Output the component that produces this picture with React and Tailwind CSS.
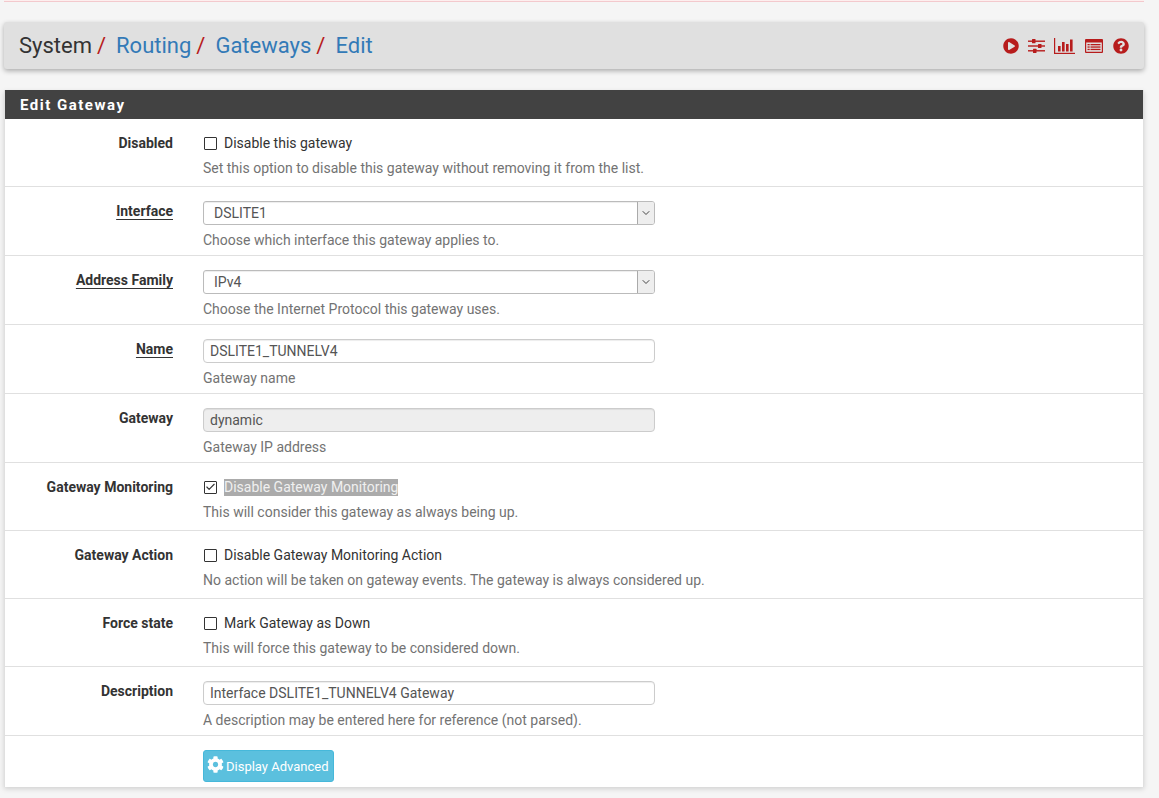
import { FaPlayCircle, FaQuestionCircle, FaCog } from 'react-icons/fa';
import { ChevronDown, Check } from 'lucide-react';

function Crumb({ children, last }) {
  return (
    <>
      <a className="text-[#337ab7]">{children}</a>
      {!last && <span className="text-[#b71c1c] ml-[5px] mr-[10px]">/</span>}
    </>
  );
}

function SlidersIcon() {
  return (
    <svg width="17" height="14" viewBox="0 0 17 14" fill="#b71c1c">
      <rect x="0" y="1.5" width="17" height="1.4" />
      <rect x="0" y="6.3" width="17" height="1.4" />
      <rect x="0" y="11.1" width="17" height="1.4" />
      <rect x="4" y="0" width="3.5" height="4.2" rx="0.5" />
      <rect x="10" y="4.9" width="3.5" height="4.2" rx="0.5" />
      <rect x="5" y="9.8" width="3.5" height="4.2" rx="0.5" />
    </svg>
  );
}

function BarsIcon() {
  return (
    <svg width="21" height="16" viewBox="0 0 21 16" fill="#b71c1c">
      <rect x="0" y="0" width="1.2" height="16" />
      <rect x="0" y="14.8" width="21" height="1.2" />
      <rect x="4" y="8" width="2.6" height="5.5" />
      <rect x="8" y="4" width="2.6" height="9.5" />
      <rect x="12" y="6" width="2.6" height="7.5" />
      <rect x="16" y="1.5" width="2.6" height="12" />
    </svg>
  );
}

function TableIcon() {
  return (
    <svg width="18" height="14" viewBox="0 0 18 14" fill="#b71c1c">
      <path fillRule="evenodd" d="M1 0h16a1 1 0 0 1 1 1v12a1 1 0 0 1-1 1H1a1 1 0 0 1-1-1V1a1 1 0 0 1 1-1zm.2 3.4v9.4h15.6V3.4z" />
      <rect x="2.5" y="5" width="2.2" height="1.3" />
      <rect x="5.5" y="5" width="10" height="1.3" />
      <rect x="2.5" y="7.4" width="2.2" height="1.3" />
      <rect x="5.5" y="7.4" width="10" height="1.3" />
      <rect x="2.5" y="9.8" width="2.2" height="1.3" />
      <rect x="5.5" y="9.8" width="10" height="1.3" />
    </svg>
  );
}

function Checkbox({ checked, label, selected }) {
  return (
    <div className="flex items-center h-[20px]">
      <span className="ml-[1px] w-[13px] h-[13px] border border-[#333] rounded-[1px] bg-white flex items-center justify-center">
        {checked && <Check size={12} strokeWidth={2.5} className="text-[#333]" />}
      </span>
      <span className={selected ? 'ml-[7px] bg-[#ababab] text-[#f0f0f0] leading-[17px]' : 'ml-[7px] text-[#333] leading-[17px]'}>{label}</span>
    </div>
  );
}

function SelectBox({ value }) {
  return (
    <div className="w-[452px] h-[24px] border border-[#bbb] rounded-[3px] bg-white flex items-center justify-between shadow-[inset_0_1px_1px_rgba(0,0,0,0.075)]">
      <span className="pl-[10px] text-[#555]">{value}</span>
      <span className="w-[17px] h-[22px] bg-[#eee] border-l border-[#aaa] rounded-r-[2px] flex items-center justify-center">
        <ChevronDown size={12} className="text-[#444]" />
      </span>
    </div>
  );
}

function TextBox({ value, disabled }) {
  return (
    <div className={`w-[452px] h-[24px] border border-[#ccc] rounded-[4px] flex items-center pl-[6px] text-[#555] shadow-[inset_0_1px_1px_rgba(0,0,0,0.075)] ${disabled ? 'bg-[#eee]' : 'bg-white'}`}>
      {value}
    </div>
  );
}

function Row({ label, required, help, height, children }) {
  return (
    <div className="flex border-b border-[#e0e0e0]" style={{ height }}>
      <div className="w-[168px] pt-[14px] text-right shrink-0">
        <span className={`font-bold text-[#333] leading-[20px] ${required ? 'underline underline-offset-[3px]' : ''}`}>{label}</span>
      </div>
      <div className="ml-[30px] pt-[14px]">
        {children}
        <p className="text-[#737373] mt-[5px] leading-[20px]">{help}</p>
      </div>
    </div>
  );
}

export default function App() {
  return (
    <div className="w-[1159px] h-[798px] overflow-hidden bg-[#f5f5f5] font-['Roboto',sans-serif] text-[14px] text-[#333]">
      <div className="mx-[4px] w-[1140px] h-[2px] bg-[#fdeeee] border-b border-[#f3c9cd]" />

      <div className="mx-[4px] w-[1140px] h-[47px] mt-[20px] bg-[#e0e0e0] rounded-[3px] shadow-[0_2px_5px_rgba(0,0,0,0.3)] flex items-center justify-between pl-[15px] pr-[15px]">
        <div className="text-[22px] leading-none flex items-baseline">
          <span className="text-[#333]">System</span>
          <span className="text-[#b71c1c] ml-[5px] mr-[10px]">/</span>
          <Crumb>Routing</Crumb>
          <Crumb>Gateways</Crumb>
          <Crumb last>Edit</Crumb>
        </div>
        <div className="flex items-center text-[#b71c1c]">
          <FaPlayCircle size={16} className="mr-[9px]" />
          <span className="mr-[9px]"><SlidersIcon /></span>
          <span className="mr-[10px]"><BarsIcon /></span>
          <span className="mr-[10px]"><TableIcon /></span>
          <FaQuestionCircle size={16} />
        </div>
      </div>

      <div className="mx-[4px] w-[1140px] mt-[21px] bg-white border-x border-[#e0e0e0] shadow-[0_2px_5px_rgba(0,0,0,0.15)]">
        <div className="h-[29px] bg-[#424242] flex items-center pl-[15px] pt-[1px] text-white text-[15px] font-bold tracking-[1.5px]">Edit Gateway</div>
        <Row label="Disabled" height={68} help="Set this option to disable this gateway without removing it from the list.">
          <Checkbox label="Disable this gateway" />
        </Row>
        <Row label="Interface" required height={69} help="Choose which interface this gateway applies to.">
          <SelectBox value="DSLITE1" />
        </Row>
        <Row label="Address Family" required height={69} help="Choose the Internet Protocol this gateway uses.">
          <SelectBox value="IPv4" />
        </Row>
        <Row label="Name" required height={69} help="Gateway name">
          <TextBox value="DSLITE1_TUNNELV4" />
        </Row>
        <Row label="Gateway" height={69} help="Gateway IP address">
          <TextBox value="dynamic" disabled />
        </Row>
        <Row label="Gateway Monitoring" height={68} help="This will consider this gateway as always being up.">
          <Checkbox checked selected label="Disable Gateway Monitoring" />
        </Row>
        <Row label="Gateway Action" height={68} help="No action will be taken on gateway events. The gateway is always considered up.">
          <Checkbox label="Disable Gateway Monitoring Action" />
        </Row>
        <Row label="Force state" height={68} help="This will force this gateway to be considered down.">
          <Checkbox label="Mark Gateway as Down" />
        </Row>
        <Row label="Description" height={69} help="A description may be entered here for reference (not parsed).">
          <TextBox value="Interface DSLITE1_TUNNELV4 Gateway" />
        </Row>
        <div className="h-[51px] pl-[198px] pt-[14px]">
          <button className="w-[131px] h-[32px] bg-[#5bc0de] border border-[#46b8da] rounded-[3px] text-white text-[13px] flex items-center pl-[3px] gap-[2px] pt-[1px]">
            <FaCog size={17} className="-mt-[5px]" />
            Display Advanced
          </button>
        </div>
      </div>
    </div>
  );
}
